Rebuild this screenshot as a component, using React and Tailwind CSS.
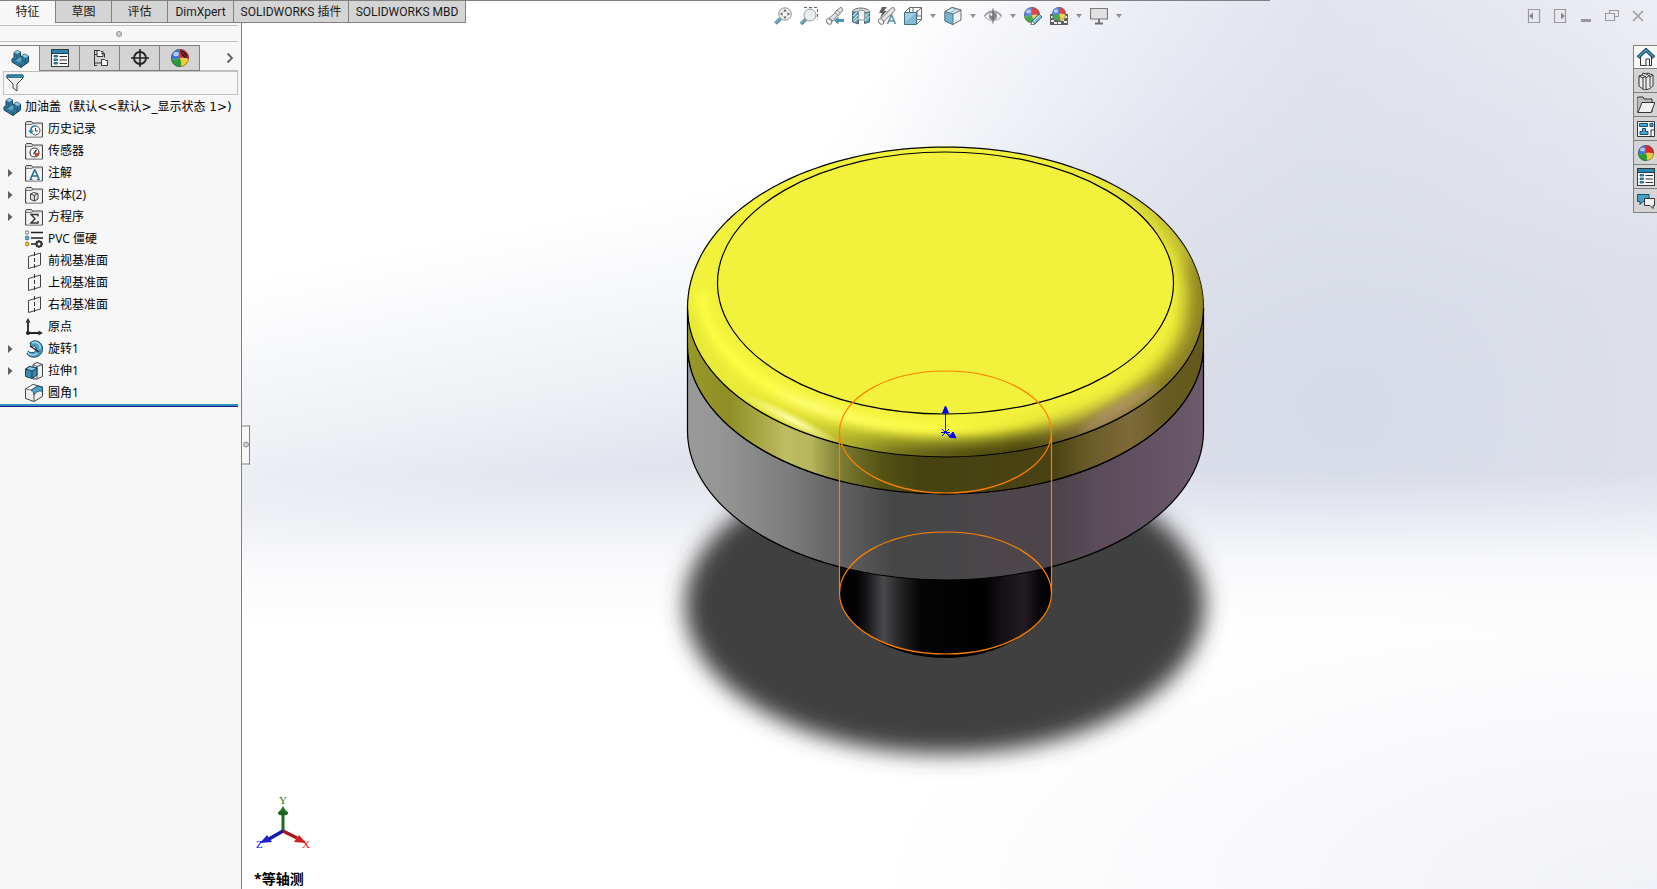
import React from 'react';

function Icon({ children, className = 'w-[18px] h-[18px]' }) {
  return (
    <svg className={`${className} shrink-0`} viewBox="0 0 18 18" fill="none" aria-hidden="true">
      {children}
    </svg>
  );
}

function PartIcon({ className }) {
  return (
    <Icon className={className}>
      <path d="M3 2.500 6.500.500 9.500 2v5.500l1.500-1V5.500L14 4l3.500 2v6L10 17.500 1 12V9l2-1.500z" fill="#2f789b" stroke="#173f55" strokeLinejoin="round" />
      <path d="m3 2.500 3.500-2 3 1.500L6 4z" fill="#8cc6e0" />
      <path d="M11 5.800 14 4l3.500 2-3 2z" fill="#8cc6e0" />
      <path d="m6 9 3.500-1.500 1.500-1V10l-3 2.500L4 10z" fill="#5ea5c6" />
      <path d="M6 4v5l-3 1M11 6v4l3.500 2M14.500 8v6M10 14v3.500" stroke="#173f55" strokeWidth=".7" />
    </Icon>
  );
}

function PropertyIcon({ className }) {
  return (
    <Icon className={className}>
      <rect x=".5" y=".5" width="17" height="17" fill="#f8f8f8" stroke="#2f3a40" />
      <path d="M1 1h16v3H1z" fill="#2f83aa" />
      <path d="M1 4.500h16" stroke="#173f55" />
      <path d="M3 6.500h3.500V8H3zM3 10h3.500v1.500H3zM3 13.500h3.500V15H3z" fill="#4aa5cf" stroke="#14506e" strokeWidth=".8" />
      <path d="M8.500 7.500H16M8.500 11H16M8.500 14.500H16" stroke="#333" />
    </Icon>
  );
}

function ConfigIcon() {
  return (
    <Icon>
      <path d="M3.500 1v16M3.500 1.500H6M3.500 16.500H6M3.500 5.500H7M3.500 14H10" stroke="#333" />
      <path d="M6 1.500h3l1 1h2v5H6zM10.500 10.500h3l1 1h2v5h-6z" fill="#f2f2f2" stroke="#333" />
      <path d="M10 4.500h3.500v4" stroke="#333" />
    </Icon>
  );
}

function TargetIcon() {
  return (
    <Icon>
      <circle cx="9" cy="9" r="6" stroke="#222" strokeWidth="1.800" />
      <path d="M9 0v18M0 9h18" stroke="#222" strokeWidth="1.600" />
    </Icon>
  );
}

function BallShape({ cx = 9, cy = 9, r = 8 }) {
  return (
    <g transform={`translate(${cx} ${cy}) scale(${r / 8})`}>
      <path d="M0 0V-8A8 8 0 0 0-8 1Q-4 2 0 0" fill="#3b78d8" />
      <path d="M0 0V-8A8 8 0 0 1 8 1Q4-1 0 0" fill="#d8292b" />
      <path d="M0 0Q-4 2-8 1A8 8 0 0 0 1 8Q2 4 0 0" fill="#2c9b36" />
      <path d="M0 0Q4-1 8 1A8 8 0 0 1 1 8Q2 4 0 0" fill="#f2c93a" />
      <ellipse cx="-3.500" cy="-3.500" rx="2.500" ry="2" fill="#fff" opacity=".6" />
      <circle r="7.600" stroke="#4a4a4a" strokeWidth=".7" opacity=".7" />
    </g>
  );
}

function BallIcon({ dark }) {
  return (
    <Icon>
      <BallShape r={dark ? 9 : 8} />
      {dark && <path d="M9 1.500c4 0 7 3 7.500 6.500L14 9C12 8 10 5 9 1.500z" fill="#2a1a1a" />}
      {dark && <path d="m11 3 4 5" stroke="#d8292b" />}
    </Icon>
  );
}

function FolderIcon({ children }) {
  return (
    <Icon>
      <path d="M.500 17V3l1-1.500h5l1 1.500h10v14z" fill="#dcdcdc" stroke="#4a4a4a" />
      <path d="M2 5h14.500v11.500H2z" fill="#f4f4f4" />
      <path d="M1 4.500h6l1-1.500" stroke="#777" />
      {children}
    </Icon>
  );
}

function PlaneIcon() {
  return (
    <Icon>
      <path d="M3.500 4.500 15.500 1v12L3.500 16.500z" stroke="#444" />
      <path d="M9.500 0v18" stroke="#333" strokeDasharray="4 2" />
    </Icon>
  );
}

const treeItems = [
  {
    label: '历史记录',
    icon: (
      <FolderIcon>
        <circle cx="10.500" cy="10.500" r="4.500" stroke="#555" fill="#fff" />
        <path d="M10.500 8v3h2.500" stroke="#444" />
        <path d="M3 10.500h6L6 14z" fill="#2f83aa" />
        <path d="M5.500 11c0-3 2-5 5-5" stroke="#2f83aa" strokeWidth="1.400" />
      </FolderIcon>
    ),
  },
  {
    label: '传感器',
    icon: (
      <FolderIcon>
        <circle cx="9.500" cy="10.500" r="4.500" fill="#fff" stroke="#444" strokeWidth="1.200" />
        <path d="M10 11h4a4 4 0 0 1-4 4z" fill="#e03c1e" />
        <path d="m8.500 12 3-4" stroke="#333" strokeWidth="1.300" />
      </FolderIcon>
    ),
  },
  {
    label: '注解',
    expandable: true,
    icon: (
      <FolderIcon>
        <path d="m5.500 15 4-9h.500l4 9M6.800 12h5.500" stroke="#2a6f90" strokeWidth="1.600" />
        <path d="M4.500 15.500h3M12 15.500h3" stroke="#2a6f90" />
      </FolderIcon>
    ),
  },
  {
    label: '实体(2)',
    expandable: true,
    icon: (
      <FolderIcon>
        <path d="m5.500 8 3-1.500 4.500 1v5.500L9.500 15l-4-1.500z" fill="#ddd" stroke="#444" />
        <path d="m5.500 8 4 1.500L13 7.500M9.500 9.500V15" stroke="#444" />
      </FolderIcon>
    ),
  },
  {
    label: '方程序',
    expandable: true,
    icon: (
      <FolderIcon>
        <path d="M13 8.500v-2H6l4 4.300L6 15h7v-2" stroke="#333" strokeWidth="1.400" />
      </FolderIcon>
    ),
  },
  {
    label: 'PVC 僵硬',
    icon: (
      <Icon>
        <path d="M6 2.500h12M6 8h12M6 14h5" stroke="#222" strokeWidth="1.600" />
        <circle cx="2" cy="2.500" r="1.700" fill="#fff" stroke="#666" />
        <circle cx="2" cy="8" r="1.900" fill="#6bbbe0" stroke="#2a7296" />
        <circle cx="2" cy="14" r="1.900" fill="#f7cd3c" stroke="#a17a12" />
        <circle cx="14" cy="14" r="2.500" stroke="#333" strokeWidth="2" />
        <path d="M14 10v8M10 14h8M11.200 11.200l5.600 5.600M16.800 11.200l-5.600 5.600" stroke="#333" strokeDasharray="2 4" strokeWidth="1.300" />
      </Icon>
    ),
  },
  { label: '前视基准面', icon: <PlaneIcon /> },
  { label: '上视基准面', icon: <PlaneIcon /> },
  { label: '右视基准面', icon: <PlaneIcon /> },
  {
    label: '原点',
    icon: (
      <Icon>
        <path d="M3 15V3M3 15h12" stroke="#222" strokeWidth="1.800" />
        <path d="m3 0 2.500 4.500h-5zM18 15l-4.500 2.500v-5z" fill="#333" />
        <circle cx="3" cy="15" r="2" fill="#222" />
      </Icon>
    ),
  },
  {
    label: '旋转1',
    expandable: true,
    icon: (
      <Icon>
        <path d="M5 3C10-2 18 2 17.500 9.500 17 17 7 20 2 14l1-3c3 3 8 2 8-2 0-3-3-4-5-2z" fill="#4c9fc6" stroke="#17465f" />
        <path d="M7 3c4-2 9 1 8 6" stroke="#a5d8ee" strokeWidth="1.500" />
        <path d="M2 11c2 5 7 5 10 2" stroke="#a5d8ee" strokeWidth="1.200" />
        <path d="m5 6 9 6" stroke="#222" strokeWidth="1.300" />
      </Icon>
    ),
  },
  {
    label: '拉伸1',
    expandable: true,
    icon: (
      <Icon>
        <path d="m8 2.500 4-2 5.500 2v12L12 17H8z" fill="#eee" stroke="#444" />
        <path d="m12 4.500 5.500-2M12 4.500V17M8 2.500l4 2" stroke="#555" />
        <path d="m.500 7 4-2.500L12 6v7l-5 3.500-6.500-2z" fill="#3987ab" stroke="#153f55" />
        <path d="m.500 7 4-2.500L12 6 7 9z" fill="#8bc9e5" stroke="#153f55" />
        <path d="M7 9v7" stroke="#153f55" />
      </Icon>
    ),
  },
  {
    label: '圆角1',
    icon: (
      <Icon>
        <path d="M.500 5 8 .500 17.500 3v9.500L9 17.500l-8.500-3z" fill="#eee" stroke="#444" />
        <path d="M.500 5 8 .500l5 1.500L6 6z" fill="#fff" stroke="#555" strokeWidth=".8" />
        <path d="M6 6.500C8 5 10 3 13 2l4.500 1.500v4C14 6 11 8 9 11 9 8 8 7 6 6.500z" fill="#4fa1c7" stroke="#17465f" strokeWidth=".8" />
        <path d="M9 10v7.500" stroke="#555" />
      </Icon>
    ),
  },
];

const commandTabs = [
  { label: '特征', className: 'w-14 bg-[#f7f7f7] border-r' },
  { label: '草图', className: 'w-14 bg-[#d4d4d4] border-r border-b' },
  { label: '评估', className: 'w-14 bg-[#d4d4d4] border-r border-b' },
  { label: 'DimXpert', className: 'w-[66px] bg-[#d4d4d4] border-r border-b' },
  { label: 'SOLIDWORKS 插件', className: 'w-[115px] bg-[#d4d4d4] border-r border-b' },
  { label: 'SOLIDWORKS MBD', className: 'w-[117px] bg-[#d4d4d4] border-r border-b' },
];

const managerTabs = [
  { label: 'FeatureManager', icon: <PartIcon /> },
  { label: 'PropertyManager', icon: <PropertyIcon /> },
  { label: 'ConfigurationManager', icon: <ConfigIcon /> },
  { label: 'DimXpertManager', icon: <TargetIcon /> },
  { label: 'DisplayManager', icon: <BallIcon dark /> },
];

const viewTools = [
  {
    label: 'Zoom to fit',
    icon: (
      <Icon>
        <path d="m1.500 16.500 5-5" stroke="#3a7896" strokeWidth="3.500" />
        <path d="m1.500 16 5-5" stroke="#8cc0d8" />
        <circle cx="11" cy="7" r="6.200" fill="#f1f1f1" stroke="#777" />
        <path d="m11 2 1.700 2.500H9.300zM11 12l1.700-2.500H9.300zM6 7l2.500-1.700v3.400zM16 7l-2.500-1.700v3.400z" fill="#444" />
      </Icon>
    ),
  },
  {
    label: 'Zoom to area',
    icon: (
      <Icon>
        <path d="M4 .500h13.500v12" stroke="#444" strokeDasharray="3 2" />
        <path d="m1 17 5-5" stroke="#3a7896" strokeWidth="3.500" />
        <path d="m1 16.500 5-5" stroke="#8cc0d8" />
        <circle cx="10" cy="8" r="6" fill="#e4ecef" stroke="#888" />
      </Icon>
    ),
  },
  {
    label: 'Previous view',
    icon: (
      <Icon>
        <path d="M1 13 9 6l1-2 5-4 2 3-4 5-2 1-7 8z" fill="#dcdcdc" stroke="#666" />
        <path d="m3 11 4 3M9 5l3 4M11 3l3 3" stroke="#777" />
        <ellipse cx="3" cy="14.500" rx="2.200" ry="3" transform="rotate(-40 3 14.500)" fill="#fff" stroke="#666" />
        <path d="m8 13.500 4.500-4V12H18v3h-5.500v2.500z" fill="#2f83aa" />
      </Icon>
    ),
  },
  {
    label: 'Section view',
    icon: (
      <Icon>
        <path d="M.500 4C3 0 14 0 17.500 4v11l-5 1.500V8h-6v9L.500 15z" fill="#cfcfcf" stroke="#555" />
        <path d="M1 5h5v11.500L1 14.500zM12.500 5.500h5v9l-5 1.500z" fill="#4b9fc2" stroke="#1f566f" />
        <path d="m1 9 4-4M1 13l5-5M2 15l4-4M12.500 10l4-4M12.500 14l5-5" stroke="#d4edf6" />
        <path d="M6.500 4v9h6V4c-2-1-4-1-6 0z" fill="#f0f0f0" stroke="#888" />
      </Icon>
    ),
  },
  {
    label: 'Dynamic annotation views',
    icon: (
      <Icon>
        <path d="m4 0-3 6h3L2 11l7-7H6l3-4z" fill="#444" />
        <path d="m1 13 8-7 1-2 5-4 2 3-4 5-2 1-7 8z" fill="#dcdcdc" stroke="#666" />
        <ellipse cx="3" cy="14.500" rx="2.200" ry="3" transform="rotate(-40 3 14.500)" fill="#fff" stroke="#666" />
        <path d="m9.500 17 4-9 4 9M11 14h5" stroke="#3a7f9f" strokeWidth="1.600" />
      </Icon>
    ),
  },
  {
    label: 'View orientation',
    menu: true,
    icon: (
      <Icon>
        <path d="M5.500 5V.500h12v12H13M13 5l4.500-4.500M1 5l4.500-4.500M13 17l4.500-4.500M9 0v5M13 3v6M13 9h5" stroke="#555" />
        <path d="M.500 5.500h12v12H.500z" fill="#6db0d0" stroke="#24546a" />
        <path d="M1 6h11L1 15z" fill="#a9d4e7" opacity=".6" />
      </Icon>
    ),
  },
  {
    label: 'Display style',
    menu: true,
    icon: (
      <Icon>
        <path d="M1 4.500 8 .500l9 2.500v10L9 17.500 1 14z" fill="#f0f4f6" stroke="#555" />
        <path d="M1 4.500 9 7v10.500L1 14z" fill="#60a9c8" stroke="#2b637c" />
        <path d="m1 4.500 7-4 9 2.500-8 4z" fill="#d0e8f2" stroke="#555" />
        <path d="m6 6 6-4" stroke="#60a9c8" />
      </Icon>
    ),
  },
  {
    label: 'Hide/show items',
    menu: true,
    icon: (
      <Icon>
        <path d="M.500 9.500C5 2.500 13 2.500 17.500 9.500 13 15 5 15 .500 9.500z" fill="#eee" stroke="#999" />
        <path d="M.500 9C5 2.500 13 2.500 17.500 9" stroke="#888" strokeWidth="1.500" />
        <circle cx="9" cy="9" r="4" fill="#777" />
        <circle cx="7.500" cy="7.500" r="1.300" fill="#fff" />
        <path d="M9 1.500v15" stroke="#444" />
      </Icon>
    ),
  },
  {
    label: 'Edit appearance',
    icon: (
      <Icon>
        <BallShape cx={8} cy={8} />
        <path d="m7 18 1-4 7-7 3 3-7 7z" fill="#62aacb" stroke="#2b5569" />
        <path d="m7 18 1-4 3 3z" fill="#f5f5f5" stroke="#444" strokeWidth=".7" />
        <path d="m9.500 14.500 6-6" stroke="#d7eef7" />
      </Icon>
    ),
  },
  {
    label: 'Apply scene',
    menu: true,
    icon: (
      <Icon>
        <path d="M0 7h18v11H0z" fill="#444" />
        <path d="M1 9h3v2H1zM4 11h3v2H4zM1 13h3v2H1zM14 9h3v2h-3zM11 12h3v2h-3zM14 14h3v2h-3zM4 15h3v2H4zM8 15h3v2H8z" fill="#eee" />
        <BallShape cx={9} cy={7} r={7} />
      </Icon>
    ),
  },
  {
    label: 'View settings',
    menu: true,
    icon: (
      <Icon>
        <path d="M.500 1.500h17v10.500H.500z" fill="#dedede" stroke="#666" strokeWidth="1.200" />
        <path d="M9 12v4M5 16.500h8" stroke="#555" strokeWidth="1.800" />
      </Icon>
    ),
  },
];

const windowButtons = [
  { label: 'Expand left', path: <path d="M1.500 2.500h11v13h-11z" />, arrow: 'M2 9l4-3.500v7z' },
  { label: 'Expand right', path: <path d="M1.500 2.500h11v13h-11z" />, arrow: 'M12 9 8 5.500v7z' },
  { label: 'Minimize', path: <path d="M2 13.500h10" strokeWidth="3" /> },
  { label: 'Restore', path: <path d="M.500 6.500h9v7h-9zM4.500 6V3.500h9v6H10" /> },
  { label: 'Close', path: <path d="m2 4 10 10M12 4 2 14" strokeWidth="1.500" /> },
];

const taskPanes = [
  {
    label: 'SOLIDWORKS Resources',
    icon: (
      <Icon>
        <path d="M3.500 8v9.500h11V8L9 3z" fill="#f8f8f8" stroke="#333" />
        <path d="M9 17.500V11h3.500v6.500" fill="#fff" stroke="#333" />
        <path d="M1 9.500 9 2l8 7.500" stroke="#153f55" strokeWidth="3.600" />
        <path d="M1.500 9 9 2l7.500 7" stroke="#4b9ec4" strokeWidth="1.600" />
      </Icon>
    ),
  },
  {
    label: 'Design Library',
    icon: (
      <Icon>
        <path d="m2 4 3-1 1-2 3 1 2-1 2 1 3 1v11l-4 3-5 1-5-4z" fill="#eee" stroke="#333" />
        <path d="m2 4 4 2v11M5 3l4 2v12M9 2l4 2v11M6 6l3-2M9 6l4-3M13 5l3-2" stroke="#333" />
      </Icon>
    ),
  },
  {
    label: 'File Explorer',
    icon: (
      <Icon>
        <path d="M0 16V2l1-1h5l1 2h8v13z" fill="#bdbdbd" stroke="#333" />
        <path d="M5 6.500h13L14 16.500H1z" fill="#f2f2f2" stroke="#333" />
      </Icon>
    ),
  },
  {
    label: 'View Palette',
    icon: (
      <Icon>
        <path d="M.500 1.500h17v15H.500z" fill="#f4f4f4" stroke="#333" />
        <path d="M2.500 3.500h8v3h-8zM13 3.500h3v3h-3zM5.500 8.500h3v3H11v3H3v-3h2.500z" fill="#4aa5cf" stroke="#14506e" />
        <path d="M14 10v6.500M14 10h3.500" stroke="#333" />
      </Icon>
    ),
  },
  { label: 'Appearances', icon: <BallIcon /> },
  { label: 'Custom Properties', icon: <PropertyIcon /> },
  {
    label: 'Forum',
    icon: (
      <Icon>
        <path d="M.500 2.500H12v7H6l-3 3v-3H.500z" fill="#4a9fc5" stroke="#14506e" />
        <path d="M7.500 6.500h10v7H16v3l-3-3H7.500z" fill="#f1f1f1" stroke="#333" />
      </Icon>
    ),
  },
];

// Silhouette of the rounded rim: a 30px offset from its centre line.
const rimOutline =
  Array.from({ length: 180 }, (_, i) => {
    const t = (i / 180) * Math.PI * 2;
    const nx = Math.cos(t) / 228;
    const ny = Math.sin(t) / 131;
    const n = Math.hypot(nx, ny);
    const x = 945.5 + 228 * Math.cos(t) + (30 * nx) / n;
    const y = 308 + 131 * Math.sin(t) + (30 * ny) / n;
    return `${i ? 'L' : 'M'}${x.toFixed(1)} ${y.toFixed(1)}`;
  }).join('') + 'Z';

function Stops({ list }) {
  return list.map(([offset, color, opacity = 1]) => (
    <stop key={offset} offset={`${offset}%`} stopColor={color} stopOpacity={opacity} />
  ));
}

function CapModel() {
  return (
    <svg
      className="absolute inset-0 w-full h-full"
      viewBox="242 0 1415 889"
      preserveAspectRatio="xMidYMid slice"
      fill="none"
      role="img"
      aria-label="加油盖"
    >
      <defs>
        <linearGradient id="band" gradientUnits="userSpaceOnUse" x1="687" y1="0" x2="1203" y2="0">
          <Stops list={[[0, '#98982a'], [8, '#8f8f26'], [14, '#a6a644'], [19, '#bdbd62'], [24, '#b6b65e'], [30, '#7b7b32'], [38, '#525214'], [45, '#464311'], [71, '#4a4212'], [78, '#6a5c28'], [86, '#7e6a3a'], [93, '#685b20'], [100, '#64581a']]} />
        </linearGradient>
        <linearGradient id="body" gradientUnits="userSpaceOnUse" x1="687" y1="0" x2="1203" y2="0">
          <Stops list={[[0, '#9a9a9a'], [6, '#969696'], [20, '#7c7c7c'], [30, '#606060'], [40, '#454745'], [50, '#474648'], [60, '#4c464a'], [72, '#4c444a'], [80, '#5c4c5a'], [100, '#6a5a6a']]} />
        </linearGradient>
        <linearGradient id="stem" gradientUnits="userSpaceOnUse" x1="839" y1="0" x2="1051" y2="0">
          <Stops list={[[0, '#000000'], [8, '#020203'], [13, '#161618'], [21, '#4a4a4c'], [29, '#242426'], [38, '#050506'], [68, '#000000'], [77, '#141015'], [87, '#241c24'], [94, '#0a080a'], [100, '#000000']]} />
        </linearGradient>
        <linearGradient id="rimShade" gradientUnits="userSpaceOnUse" x1="687" y1="0" x2="1203" y2="0">
          <Stops list={[[0, '#c0c02a', 0.2], [10, '#c6c62c', 0.2], [20, '#caca30', 0.6], [30, '#a8a82a', 0.9], [42, '#6c6a16'], [55, '#4c4810'], [66, '#4a4410'], [76, '#7a6a32'], [83, '#8a7640'], [90, '#75681e', 0.8], [100, '#75691c', 0.5]]} />
        </linearGradient>
        <linearGradient id="rimSide" gradientUnits="userSpaceOnUse" x1="945" y1="200" x2="1203" y2="330">
          <Stops list={[[0, '#8a8420', 0], [45, '#8a8420', 0.1], [100, '#857a1e', 0.8]]} />
        </linearGradient>
        <linearGradient id="glow" gradientUnits="userSpaceOnUse" x1="687" y1="0" x2="1203" y2="0">
          <Stops list={[[0, '#ffff40', 0.9], [15, '#ffff48'], [24, '#ffff80'], [32, '#ffff60'], [50, '#ffff44'], [64, '#f4f43c', 0.6], [76, '#e8e838', 0]]} />
        </linearGradient>
        <radialGradient id="spark">
          <stop offset="0" stopColor="#ffffb0" />
          <stop offset="1" stopColor="#ffffa0" stopOpacity="0" />
        </radialGradient>
        <filter id="soft" x="-20%" y="-20%" width="140%" height="140%">
          <feGaussianBlur stdDeviation="11" />
        </filter>
        <filter id="blend" x="-20%" y="-20%" width="140%" height="140%">
          <feGaussianBlur stdDeviation="9" />
        </filter>
        <filter id="fine" x="-20%" y="-50%" width="140%" height="200%">
          <feGaussianBlur stdDeviation="4" />
        </filter>
        <clipPath id="rimClip">
          <path d={rimOutline} />
        </clipPath>
      </defs>

      <ellipse cx="945" cy="605" rx="260" ry="149" fill="#404040" filter="url(#soft)" />

      <ellipse cx="945.5" cy="594" rx="100" ry="64" fill="#000" />
      <path d="M839.500 500h212v93a106 61 0 0 1-212 0z" fill="url(#stem)" />

      <path d="M687.500 345a258 149 0 0 0 516 0v86a258 149 0 0 1-516 0z" fill="url(#body)" stroke="#000" strokeWidth="1.200" />

      <path d={rimOutline} fill="#f2f23c" stroke="#000" strokeWidth="1.200" />
      <g clipPath="url(#rimClip)">
        <ellipse cx="945" cy="306" rx="264" ry="168" stroke="url(#rimSide)" strokeWidth="34" filter="url(#blend)" />
        <path d="M687 308a258 149 0 0 0 516 0q4-20 0-50" stroke="url(#rimShade)" strokeWidth="34" filter="url(#blend)" />
        <path d="M702 292a243 136 0 0 0 486 0" stroke="url(#glow)" strokeWidth="10" filter="url(#fine)" />
        <ellipse cx="792" cy="420" rx="58" ry="7" transform="rotate(27 792 420)" fill="url(#spark)" />
        <ellipse cx="1120" cy="408" rx="46" ry="6" transform="rotate(-32 1120 408)" fill="#b89870" opacity=".7" filter="url(#fine)" />
      </g>
      <path d="M687.500 308a258 149 0 0 0 516 0v37a258 149 0 0 1-516 0z" fill="url(#band)" stroke="#000" strokeWidth="1.200" />
      <ellipse cx="945.500" cy="283" rx="228" ry="131" fill="#f2f23c" stroke="#000" strokeWidth="1.200" />

      <g stroke="#ff8000" strokeWidth="1.200">
        <ellipse cx="945.500" cy="432" rx="106" ry="61" />
        <ellipse cx="945.500" cy="593" rx="106" ry="61" />
        <path d="M839.500 432v161M1051.500 432v161" />
      </g>

      <g stroke="#0000ff" fill="#0000ff">
        <path d="M945.500 432v-20M942 429l7 7M942 436l7-7M941 432.500h9M945 432l8 5" />
        <path d="m945.500 406 3 7h-6zM956 438l-7-1 4-5z" />
      </g>
    </svg>
  );
}

function Triad() {
  return (
    <svg className="w-16 h-16" viewBox="0 -6 64 64" aria-hidden="true">
      <path d="M29 36V14" stroke="#1c6b22" strokeWidth="3" />
      <path d="m29 11 5 8H24z" fill="#23782a" />
      <ellipse cx="29" cy="18" rx="5" ry="2.500" fill="#1d6426" />
      <path d="m29 36-14 8" stroke="#1616a8" strokeWidth="3.500" />
      <path d="m6 48 7-8 5 7z" fill="#2020d0" />
      <path d="m29 36 14 7" stroke="#a81818" strokeWidth="3.500" />
      <path d="m52 48-7-8-5 7z" fill="#d02020" />
      <g fontFamily="'Liberation Serif', serif" fontSize="11">
        <text x="25" y="9" fill="#008000">Y</text>
        <text x="2" y="53" fill="#0000ff">Z</text>
        <text x="48" y="53" fill="#ff0000">X</text>
      </g>
    </svg>
  );
}

function FeatureTree() {
  return (
    <ul className="pt-px text-xs text-black whitespace-nowrap mr-[3px] border-b border-[#1c1c90]">
      <li className="flex items-center gap-1 h-[22px] pl-[3px]">
        <PartIcon />
        <span className="whitespace-pre font-['DejaVu_Sans','Noto_Sans_CJK_SC',sans-serif]">加油盖  (默认&lt;&lt;默认&gt;_显示状态 1&gt;)</span>
      </li>
      {treeItems.map((item) => (
        <li key={item.label} className="flex items-center h-[22px] pl-2">
          <span className="w-[17px] flex">
            {item.expandable && (
              <button type="button" aria-label={`展开 ${item.label}`}>
                <svg className="w-[5px] h-2" viewBox="0 0 5 8">
                  <path d="M0 0l4.500 4L0 8z" fill="#606060" />
                </svg>
              </button>
            )}
          </span>
          {item.icon}
          <span className="ml-[5px]">{item.label}</span>
        </li>
      ))}
      <li className="h-0.5 bg-[#2f8fc0]" aria-hidden="true" />
    </ul>
  );
}

function Sidebar() {
  return (
    <aside className="col-start-1 row-start-2 bg-[#f7f7f7] border-r border-[#808080]">
      <div className="mt-0.5 mr-[3px] h-[17px] border-y border-[#c0c0c0] flex items-center justify-center">
        <span className="w-1.5 h-1.5 rounded-full border border-[#909090] bg-[#d0d0d0]" />
      </div>
      <div className="mt-[3px] mr-[3px] h-[26px] flex">
        {managerTabs.map((tab, i) => (
          <button
            key={tab.label}
            type="button"
            aria-label={tab.label}
            className={
              i === 0
                ? 'w-10 flex items-center justify-center border-t border-r border-[#808080]'
                : 'w-10 flex items-center justify-center border-t border-r border-b border-[#808080] bg-[#d4d4d4]'
            }
          >
            {tab.icon}
          </button>
        ))}
        <button type="button" aria-label="更多" className="flex-1 border-b border-[#c0c0c0] flex items-center justify-end pr-1">
          <svg className="w-2 h-3" viewBox="0 0 8 12" fill="none">
            <path d="m1.500 1.500 4.500 4.500-4.500 4.500" stroke="#606060" strokeWidth="1.800" />
          </svg>
        </button>
      </div>
      <label className="mx-[3px] h-6 border border-[#c0c0c0] flex items-center gap-1 pl-0.5">
        <Icon>
          <path d="M1 1h16v3l-6 6v7l-4-3v-4L1 4z" fill="#ececec" stroke="#444" strokeLinejoin="round" />
          <path d="M1 1h16v2.500H1z" fill="#2f8fb8" stroke="#1f5f7d" strokeWidth=".8" />
        </Icon>
        <input type="text" aria-label="过滤器" className="flex-1 min-w-0 h-5 text-xs outline-none bg-transparent" />
      </label>
      <FeatureTree />
    </aside>
  );
}

function Viewport() {
  return (
    <main className="col-start-2 row-start-1 row-span-2 relative overflow-hidden bg-[radial-gradient(ellipse_55%_35%_at_100%_100%,#f1f2f7,#f1f2f700),linear-gradient(180deg,#ffffff00_53%,#ffffff60_58%,#ffffffc8_63%,#ffffff_71%),radial-gradient(ellipse_42%_62%_at_78%_46%,#d7dbe7,#d9dde9d0_35%,#dfe2ec00),linear-gradient(169deg,#e1e4ed00_24%,#e8ebf1c0_39%,#e1e4ed_47%),linear-gradient(90deg,#ffffff_45%,#f5f6fa_60%,#e5e8f0_76%,#ecedf1_90%,#f0f1f5)]">
      <CapModel />

      <div className="absolute top-0 left-0 w-[1028px] h-px bg-[#808080]" />

      <div className="absolute top-[7px] inset-x-0 pr-1 flex items-center justify-center gap-2">
        {viewTools.map((tool) => (
          <React.Fragment key={tool.label}>
            <button type="button" aria-label={tool.label} className="opacity-85">
              {tool.icon}
            </button>
            {tool.menu && (
              <button type="button" aria-label={`${tool.label} menu`}>
                <svg className="w-1.5 h-1" viewBox="0 0 6 4">
                  <path d="M0 0h6L3 4z" fill="#909090" />
                </svg>
              </button>
            )}
          </React.Fragment>
        ))}
      </div>

      <div className="absolute top-[7px] right-3 flex gap-3">
        {windowButtons.map((b) => (
          <button key={b.label} type="button" aria-label={b.label}>
            <svg className="w-3.5 h-[18px]" viewBox="0 0 14 18" fill="none" stroke="#9a9a9e" strokeWidth="1.200">
              {b.path}
              {b.arrow && <path d={b.arrow} fill="#88888c" stroke="none" />}
            </svg>
          </button>
        ))}
      </div>

      <div className="absolute top-[45px] right-0 w-6 border-t border-l border-[#808080]">
        {taskPanes.map((pane, i) => (
          <button
            key={pane.label}
            type="button"
            aria-label={pane.label}
            className={
              i === 0
                ? 'w-full h-[23px] flex items-center justify-center border-b border-[#808080] bg-[#f7f7f7]'
                : 'w-full h-6 flex items-center justify-center border-b border-[#808080] bg-[#d4d4d4]'
            }
          >
            {pane.icon}
          </button>
        ))}
      </div>

      <button
        type="button"
        aria-label="折叠面板"
        className="absolute left-0 top-1/2 -translate-y-1/2 w-2 h-[39px] bg-[#f7f7f7] border-y border-r border-[#808080] flex items-center justify-center"
      >
        <span className="w-1.5 h-1.5 rounded-full border border-[#909090] bg-[#d0d0d0]" />
      </button>

      <div className="absolute left-3 bottom-0.5">
        <Triad />
        <p className="mt-[18px] text-sm leading-4 font-bold text-black">*等轴测</p>
      </div>
    </main>
  );
}

export default function App() {
  return (
    <div className="h-screen grid grid-cols-[242px_1fr] grid-rows-[23px_1fr] bg-[#f7f7f7] overflow-hidden font-['Open_Sans','Noto_Sans_CJK_SC',sans-serif]">
      <nav className="col-start-1 col-span-2 row-start-1 z-10 justify-self-start flex border-t border-[#808080] font-['Roboto','Noto_Sans_CJK_SC',sans-serif]">
        {commandTabs.map((tab) => (
          <button
            key={tab.label}
            type="button"
            className={`${tab.className} border-[#808080] text-xs text-[#1a1a1a] whitespace-nowrap text-center`}
          >
            {tab.label}
          </button>
        ))}
      </nav>
      <Sidebar />
      <Viewport />
    </div>
  );
}
